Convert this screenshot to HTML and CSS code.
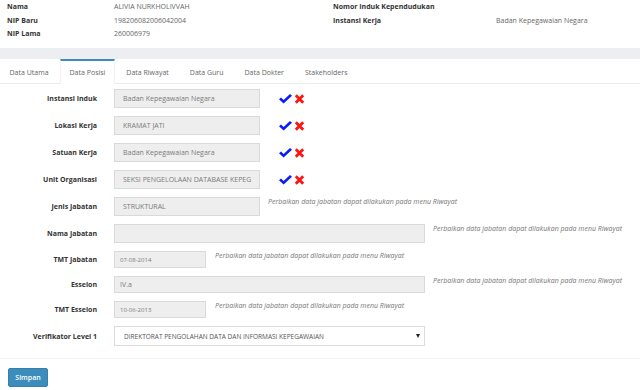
FILE: index.html
```html
<!DOCTYPE html>
<html lang="id">
<head>
  <meta charset="utf-8" />
  <title>Data Posisi</title>
  <link rel="stylesheet" href="styles.css">
</head>
<body>
  <div class="profile">
    <span class="key">Nama</span><span class="val">ALIVIA NURKHOLIVVAH</span>
    <span class="key">Nomor Induk Kependudukan</span><span class="val"></span>
    <span class="key">NIP Baru</span><span class="val">198206082006042004</span>
    <span class="key">Instansi Kerja</span><span class="val">Badan Kepegawaian Negara</span>
    <span class="key">NIP Lama</span><span class="val">260006979</span>
    <span class="key"></span><span class="val"></span>
  </div>

  <div class="band"></div>

  <ul class="tabs">
    <li class="tab">Data Utama</li>
    <li class="tab active">Data Posisi</li>
    <li class="tab">Data Riwayat</li>
    <li class="tab">Data Guru</li>
    <li class="tab">Data Dokter</li>
    <li class="tab">Stakeholders</li>
  </ul>

  <form class="form">
    <div class="field">
      <label>Instansi Induk</label>
      <div class="control">
        <input class="input md" value="Badan Kepegawaian Negara" readonly>
        <span class="actions">
          <svg class="ok" width="13" height="10" viewBox="0 0 13 10"><polygon points="0,5.2 2,3.4 4.6,5.9 11,0 13,1.8 4.6,9.6" /></svg>
          <svg class="no" width="11" height="10" viewBox="0 0 11 10"><path d="M1.8 1.3 L9.2 8.7 M9.2 1.3 L1.8 8.7" /></svg>
        </span>
      </div>
    </div>
    <div class="field">
      <label>Lokasi Kerja</label>
      <div class="control">
        <input class="input md" value="KRAMAT JATI" readonly>
        <span class="actions">
          <svg class="ok" width="13" height="10" viewBox="0 0 13 10"><polygon points="0,5.2 2,3.4 4.6,5.9 11,0 13,1.8 4.6,9.6" /></svg>
          <svg class="no" width="11" height="10" viewBox="0 0 11 10"><path d="M1.8 1.3 L9.2 8.7 M9.2 1.3 L1.8 8.7" /></svg>
        </span>
      </div>
    </div>
    <div class="field">
      <label>Satuan Kerja</label>
      <div class="control">
        <input class="input md" value="Badan Kepegawaian Negara" readonly>
        <span class="actions">
          <svg class="ok" width="13" height="10" viewBox="0 0 13 10"><polygon points="0,5.2 2,3.4 4.6,5.9 11,0 13,1.8 4.6,9.6" /></svg>
          <svg class="no" width="11" height="10" viewBox="0 0 11 10"><path d="M1.8 1.3 L9.2 8.7 M9.2 1.3 L1.8 8.7" /></svg>
        </span>
      </div>
    </div>
    <div class="field">
      <label>Unit Organisasi</label>
      <div class="control">
        <input class="input md" value="SEKSI PENGELOLAAN DATABASE KEPEGAWAIAN" readonly>
        <span class="actions">
          <svg class="ok" width="13" height="10" viewBox="0 0 13 10"><polygon points="0,5.2 2,3.4 4.6,5.9 11,0 13,1.8 4.6,9.6" /></svg>
          <svg class="no" width="11" height="10" viewBox="0 0 11 10"><path d="M1.8 1.3 L9.2 8.7 M9.2 1.3 L1.8 8.7" /></svg>
        </span>
      </div>
    </div>
    <div class="field">
      <label>Jenis Jabatan</label>
      <div class="control">
        <input class="input md" value="STRUKTURAL" readonly>
        <span class="help">Perbaikan data jabatan dapat dilakukan pada menu Riwayat</span>
      </div>
    </div>
    <div class="field">
      <label>Nama Jabatan</label>
      <div class="control">
        <input class="input lg" value="" readonly>
        <span class="help">Perbaikan data jabatan dapat dilakukan pada menu Riwayat</span>
      </div>
    </div>
    <div class="field small">
      <label>TMT Jabatan</label>
      <div class="control">
        <input class="input sm" value="07-08-2014" readonly>
        <span class="help">Perbaikan data jabatan dapat dilakukan pada menu Riwayat</span>
      </div>
    </div>
    <div class="field small">
      <label>Esselon</label>
      <div class="control">
        <input class="input lg" value="IV.a" readonly>
        <span class="help">Perbaikan data jabatan dapat dilakukan pada menu Riwayat</span>
      </div>
    </div>
    <div class="field small">
      <label>TMT Esselon</label>
      <div class="control">
        <input class="input sm" value="10-06-2013" readonly>
        <span class="help">Perbaikan data jabatan dapat dilakukan pada menu Riwayat</span>
      </div>
    </div>
    <div class="field last">
      <label>Verifikator Level 1</label>
      <div class="control">
        <div class="select-wrap">
          <select class="select">
            <option>DIREKTORAT PENGOLAHAN DATA DAN INFORMASI KEPEGAWAIAN</option>
          </select>
          <span class="caret"></span>
        </div>
      </div>
    </div>
  </form>

  <div class="footer">
    <button class="btn" type="button">Simpan</button>
  </div>
</body>
</html>
```

FILE: styles.css
```css
body {
  margin: 0;
  font-family: "Open Sans", sans-serif;
  font-size: 7px;
  color: #333;
  background-color: #fff;
}

.profile {
  display: grid;
  grid-template-columns: 107px 219px 163px 1fr;
  grid-auto-rows: 13.5px;
  align-items: center;
  padding: 0 0 7.5px 7px;
}

.profile .key {
  font-weight: bold;
  color: #333;
}

.profile .val {
  color: #666;
}

.band {
  height: 11px;
  background-color: #eceef1;
}

.tabs {
  display: flex;
  margin: 0;
  padding: 0;
  list-style: none;
  height: 24px;
  border-bottom: 1px solid #ececec;
}

.tab {
  padding: 1px 9.5px 0;
  margin-right: 2px;
  line-height: 21px;
  color: #666;
  border-top: 2px solid transparent;
}

.tab.active {
  border-top-color: #3c8dbc;
  background-color: #fff;
  margin-bottom: -1px;
  border-left: 1px solid #f2f2f2;
  border-right: 1px solid #f2f2f2;
  padding: 1px 8.5px 0;
}

.form {
  padding-top: 5px;
}

.field {
  display: grid;
  grid-template-columns: 97px 1fr;
  column-gap: 17px;
  align-items: center;
  margin-bottom: 8px;
}

.field.last {
  margin-bottom: 0;
}

.field label {
  text-align: right;
  font-weight: bold;
  color: #333;
}

.control {
  display: flex;
  align-items: flex-start;
}

.input {
  box-sizing: border-box;
  height: 19px;
  margin: 0;
  padding: 0 8px;
  border: 1px solid #d9d9d9;
  background-color: #eee;
  font-family: "Open Sans", sans-serif;
  font-size: 7px;
  color: #7a7a7a;
  outline: none;
}

.field.small .input {
  height: 17px;
  padding: 0 5px;
}

.field.small .input.sm {
  font-size: 6px;
}

.input.md { width: 146px; }
.input.lg { width: 311px; }
.input.sm { width: 92px; }

.actions {
  display: flex;
  align-items: center;
  height: 19px;
  margin-left: 19px;
  gap: 2px;
}

.ok polygon {
  fill: #0a1cff;
}

.no path {
  stroke: #ff1414;
  stroke-width: 2.8;
  fill: none;
}

.help {
  margin-left: 8px;
  line-height: 10px;
  font-style: italic;
  font-size: 7px;
  color: #777;
  white-space: nowrap;
}

.field.small .input.sm + .help {
  margin-left: 9px;
}

.select-wrap {
  position: relative;
}

.select {
  box-sizing: border-box;
  width: 311px;
  height: 20px;
  margin: 0;
  padding: 0 9px;
  border: 1px solid #dcdcdc;
  background-color: #fff;
  font-family: "Open Sans", sans-serif;
  font-size: 6.5px;
  color: #555;
  appearance: none;
  -webkit-appearance: none;
  outline: none;
}

.caret {
  position: absolute;
  right: 5px;
  top: 8px;
  width: 0;
  height: 0;
  border-left: 2px solid transparent;
  border-right: 2px solid transparent;
  border-top: 4px solid #222;
}

.footer {
  margin-top: 12px;
  border-top: 1px solid #f3f3ee;
  padding: 9px 8px;
}

.btn {
  box-sizing: border-box;
  width: 40px;
  height: 19px;
  padding: 0;
  border: 1px solid #367fa9;
  border-radius: 2px;
  background-color: #3c8dbc;
  color: #fff;
  font-family: "Open Sans", sans-serif;
  font-size: 7px;
  font-weight: 600;
  cursor: pointer;
}
```
